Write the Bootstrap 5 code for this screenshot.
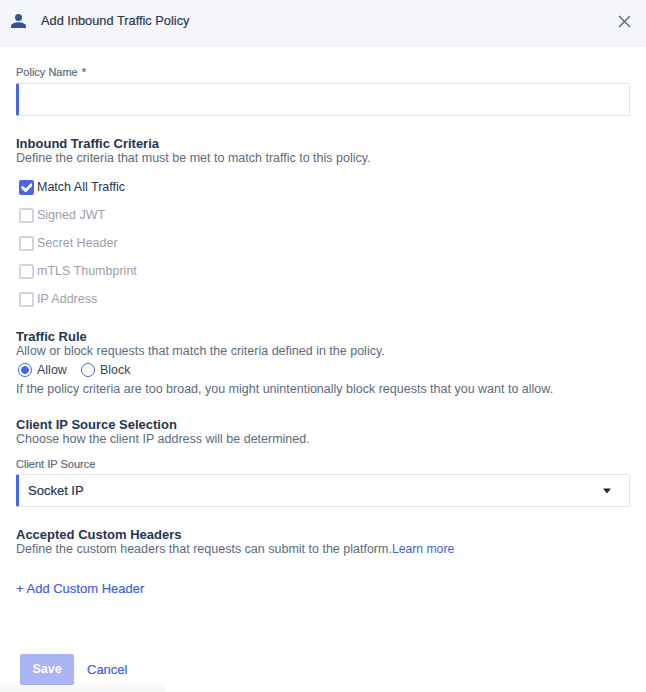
<!DOCTYPE html>
<html lang="en">
<head>
<meta charset="utf-8">
<title>Add Inbound Traffic Policy</title>
<link href="https://cdn.jsdelivr.net/npm/bootstrap@5.3.0/dist/css/bootstrap.min.css" rel="stylesheet">
<style>
html,body{height:692px;overflow:hidden}
body{font-family:"Liberation Sans",Arial,sans-serif;font-size:13px;color:#1c2b41;background:#fff;position:relative}
.dlg-head{height:46px;background:#f6f7fc;border-bottom:1px solid #e8eaf0;padding:0 15px 3px 11px}
.dlg-title{font-size:12.8px;color:#2a3a50;margin-left:15px;-webkit-text-stroke:.2px #2a3a50}
.dlg-body{padding:0 16px}
.fld-label{font-size:11px;color:#5d6b7c;line-height:16px;margin:0 0 3px;-webkit-text-stroke:.2px #5d6b7c}
.req{color:#c62828;margin-left:1px}
.fld-box{height:33px;border:1px solid #e2e3e6;border-left:3px solid #4766e8;border-radius:2px;background:#fff}
.sec-title{font-size:13px;font-weight:700;line-height:14px;color:#26354a}
.sec-desc{font-size:12.5px;line-height:14px;color:#5d6b7c}
.chk-row{height:28px;font-size:12.5px}
.chk-row .form-check-input{width:15px;height:15px;margin:0 3px 0 3px;border:2px solid #d3d5da;border-radius:2px;background-color:#fff;opacity:1;background-origin:border-box}
.chk-row .form-check-input:checked{background-color:#4766e8;border-color:#4766e8;background-size:130%;background-position:center}
.chk-row .form-check-label{color:#9aa1ab;opacity:1}
.chk-row.on .form-check-label{color:#26354a}
.rad-row{height:20px;font-size:12.5px;color:#3a475a}
.rad-row .form-check-input{width:14px;height:14px;margin:0 5px 0 0;border:1.5px solid #4766e8;background-color:#fff}
.rad-row .form-check-input:checked{background-color:#fff;background-image:radial-gradient(circle,#4766e8 0,#4766e8 3.6px,transparent 4px)}
.rad-item{margin-left:2px;margin-right:12px}
.sel-box{padding:0 17px 0 9px;font-size:13px;color:#26354a;-webkit-text-stroke:.2px #26354a}
.blue-link{color:#3f5fe6;text-decoration:none}
.learn{font-size:12.2px}
.add-link{font-size:13px;-webkit-text-stroke:.2px #3f5fe6}
.btn-save{width:54px;height:31px;padding:0;border:0;border-radius:2px;background:#a9b5f5;color:#fff;font-size:12.5px;font-weight:700;opacity:1}
.btn-save:disabled{background:#a9b5f5;color:#fff;opacity:1}
.cancel{font-size:13px;margin-left:13px;-webkit-text-stroke:.2px #3f5fe6}
.foot-fade{position:absolute;left:0;bottom:0;width:166px;height:12px;background:linear-gradient(to bottom,#fff,#f5f5f6)}
.gap-a{margin-top:21px}
.z1{position:relative;z-index:1}
</style>
</head>
<body>
<div class="foot-fade"></div>
<header class="dlg-head d-flex align-items-center">
  <svg width="15" height="14" viewBox="0 0 15 14" aria-hidden="true"><circle cx="7.5" cy="3.6" r="3.5" fill="#34548f"/><path d="M0 14v-2C0 9.4 4.6 8.2 7.5 8.2S15 9.4 15 12v2z" fill="#34548f"/></svg>
  <span class="dlg-title flex-grow-1">Add Inbound Traffic Policy</span>
  <svg width="13" height="13" viewBox="0 0 13 13" aria-hidden="true"><path d="M1 1l11 11M12 1L1 12" stroke="#5f6d7e" stroke-width="1.5" fill="none"/></svg>
</header>
<main class="dlg-body">
  <div class="fld-label" style="margin-top:18px">Policy Name <span class="req">*</span></div>
  <div class="fld-box"></div>

  <div class="sec-title gap-a">Inbound Traffic Criteria</div>
  <div class="sec-desc">Define the criteria that must be met to match traffic to this policy.</div>
  <div style="margin-top:8px">
    <div class="chk-row on d-flex align-items-center"><input class="form-check-input" type="checkbox" id="c1" checked><label class="form-check-label" for="c1">Match All Traffic</label></div>
    <div class="chk-row d-flex align-items-center"><input class="form-check-input" type="checkbox" id="c2"><label class="form-check-label" for="c2">Signed JWT</label></div>
    <div class="chk-row d-flex align-items-center"><input class="form-check-input" type="checkbox" id="c3"><label class="form-check-label" for="c3">Secret Header</label></div>
    <div class="chk-row d-flex align-items-center"><input class="form-check-input" type="checkbox" id="c4"><label class="form-check-label" for="c4">mTLS Thumbprint</label></div>
    <div class="chk-row d-flex align-items-center"><input class="form-check-input" type="checkbox" id="c5"><label class="form-check-label" for="c5">IP Address</label></div>
  </div>

  <div class="sec-title" style="margin-top:17px">Traffic Rule</div>
  <div class="sec-desc">Allow or block requests that match the criteria defined in the policy.</div>
  <div class="rad-row d-flex align-items-center" style="margin-top:2px">
    <div class="rad-item d-flex align-items-center"><input class="form-check-input" type="radio" name="r" id="r1" checked><label for="r1">Allow</label></div>
    <div class="rad-item d-flex align-items-center"><input class="form-check-input" type="radio" name="r" id="r2"><label for="r2">Block</label></div>
  </div>
  <div class="sec-desc" style="margin-top:2px">If the policy criteria are too broad, you might unintentionally block requests that you want to allow.</div>

  <div class="sec-title" style="margin-top:22px">Client IP Source Selection</div>
  <div class="sec-desc">Choose how the client IP address will be determined.</div>
  <div class="fld-label" style="margin-top:10px">Client IP Source</div>
  <div class="fld-box sel-box d-flex align-items-center justify-content-between" style="margin-top:-1px">
    <span>Socket IP</span>
    <svg width="10" height="6" viewBox="0 0 10 6" aria-hidden="true"><path d="M1 0.5h8L5 5.5z" fill="#1c2b41"/></svg>
  </div>

  <div class="sec-title" style="margin-top:21px">Accepted Custom Headers</div>
  <div class="sec-desc">Define the custom headers that requests can submit to the platform.<a class="blue-link learn" href="#">Learn more</a></div>
  <div style="margin-top:25px;line-height:16px"><a class="blue-link add-link" href="#">+ Add Custom Header</a></div>

  <div class="z1 d-flex align-items-center" style="margin:57px 0 0 4px">
    <button class="btn btn-save" type="button" disabled>Save</button>
    <a class="blue-link cancel" href="#">Cancel</a>
  </div>
</main>
</body>
</html>
